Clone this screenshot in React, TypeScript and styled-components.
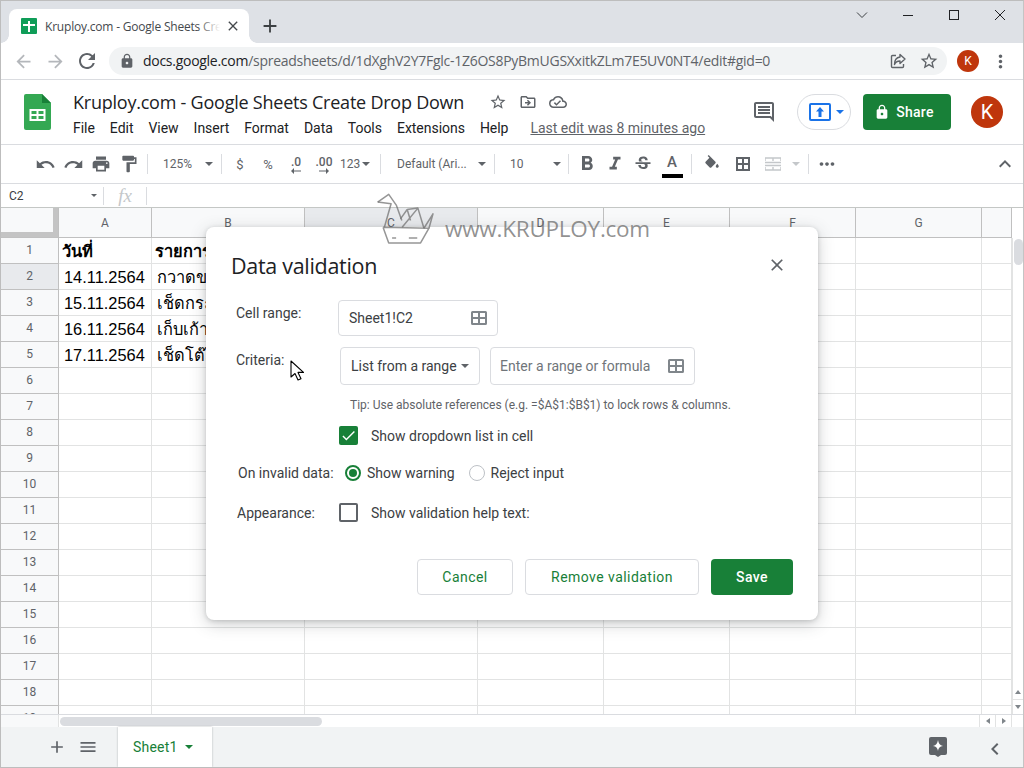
import React from 'react';
import styled, { createGlobalStyle } from 'styled-components';
import {
  MdUndo, MdRedo, MdLocalPrintshop, MdFormatPaint, MdMoreHoriz, MdKeyboardArrowUp,
  MdStarBorder, MdOutlineDriveFileMove, MdOutlineCloudDone, MdLock, MdArrowBack, MdArrowForward, MdRefresh,
  MdClose, MdAdd, MdMoreVert, MdMenu, MdChevronLeft, MdCheck, MdFormatBold, MdFormatItalic, MdStrikethroughS,
} from 'react-icons/md';

const GlobalStyle = createGlobalStyle`
  html, body { margin: 0; padding: 0; background: #fff; overflow: hidden; }
  * { box-sizing: border-box; }
`;

const ui = `Roboto, "Liberation Sans", sans-serif`;
const display = `"Open Sans", Roboto, sans-serif`;
const thai = `"Liberation Sans", "Noto Sans", "DejaVu Sans", sans-serif`;

const Frame = styled.div`
  position: relative;
  width: 1024px;
  height: 768px;
  border: 1px solid #bdbdbd;
  border-right-color: #c4c4c4;
  display: flex;
  flex-direction: column;
  overflow: hidden;
  font-family: ${ui};
  color: #3c4043;
`;

/* browser chrome */
const TabStrip = styled.div`
  height: 42px;
  flex: none;
  background: #dee1e6;
  display: flex;
  align-items: flex-end;
  padding-left: 8px;
`;

const Tab = styled.div`
  position: relative;
  width: 240px;
  height: 34px;
  background: #fff;
  border-radius: 8px 8px 0 0;
  display: flex;
  align-items: center;
  padding-left: 12px;
  &::before, &::after {
    content: '';
    position: absolute;
    bottom: 0;
    width: 8px;
    height: 8px;
  }
  &::before { left: -8px; background: radial-gradient(circle at 0 0, #dee1e6 7.5px, #fff 8px); }
  &::after { right: -8px; background: radial-gradient(circle at 100% 0, #dee1e6 7.5px, #fff 8px); }
`;

const Favicon = styled.svg`
  width: 16px;
  height: 16px;
  flex: none;
`;

const TabTitle = styled.div`
  position: relative;
  width: 175px;
  margin-left: 8px;
  font: 12px ${display};
  letter-spacing: -0.2px;
  color: #45494d;
  white-space: nowrap;
  overflow: hidden;
  &::after {
    content: '';
    position: absolute;
    top: 0;
    right: 0;
    bottom: 0;
    width: 22px;
    background: linear-gradient(90deg, rgba(255, 255, 255, 0), #fff);
  }
`;

const TabClose = styled.div`
  display: flex;
  margin-left: 5px;
  color: #45494d;
  font-size: 16px;
`;

const NewTab = styled.div`
  width: 28px;
  height: 34px;
  margin-left: 7px;
  display: flex;
  align-items: center;
  justify-content: center;
  color: #3c4043;
  font-size: 22px;
`;

const WindowControls = styled.div`
  margin-left: auto;
  align-self: flex-start;
  display: flex;
`;

const WindowButton = styled.div`
  width: 46px;
  height: 28px;
  display: flex;
  align-items: center;
  justify-content: center;
`;

const NavBar = styled.div`
  height: 37px;
  flex: none;
  border-bottom: 1px solid #dadce0;
  display: flex;
  align-items: center;
  padding-left: 6px;
`;

const NavButton = styled.div<{ $off?: boolean }>`
  width: 32px;
  display: flex;
  justify-content: center;
  font-size: 21px;
  color: ${p => (p.$off ? '#b4b7bb' : '#5f6368')};
`;

const Omnibox = styled.div`
  width: 838px;
  height: 28px;
  margin-left: 6px;
  margin-top: -1px;
  background: #f1f3f4;
  border-radius: 14px;
  display: flex;
  align-items: center;
  padding: 0 8px 0 10px;
  font: 14px ${display};
  letter-spacing: -0.275px;
  color: #5f6368;
  white-space: nowrap;
`;

const UrlHost = styled.span`
  color: #202124;
`;

const Url = styled.div`
  margin-left: 8px;
`;

const OmniIcons = styled.div`
  margin-left: auto;
  display: flex;
  align-items: center;
  gap: 12px;
  font-size: 18px;
  color: #5f6368;
`;

const Avatar = styled.div<{ $size: number }>`
  width: ${p => p.$size}px;
  height: ${p => p.$size}px;
  flex: none;
  border-radius: 50%;
  background: #bf360c;
  color: #fff;
  display: flex;
  align-items: center;
  justify-content: center;
  font: ${p => (p.$size > 24 ? 20 : 12)}px ${ui};
`;

const NavAvatar = styled(Avatar)`
  margin-left: 10px;
`;

const NavMenu = styled.div`
  margin-left: 11px;
  display: flex;
  font-size: 21px;
  color: #5f6368;
`;

/* sheets header */
const DocHeader = styled.div`
  height: 65px;
  flex: none;
  border-bottom: 1px solid #dadce0;
  display: flex;
  align-items: center;
`;

const LogoBox = styled.div`
  width: 72px;
  flex: none;
  display: flex;
  padding-left: 23px;
`;

const TitleColumn = styled.div`
  display: flex;
  flex-direction: column;
  margin-top: 3px;
`;

const TitleRow = styled.div`
  display: flex;
  align-items: center;
  height: 24px;
`;

const DocTitle = styled.div`
  width: 392px;
  font: 18px ${display};
  letter-spacing: -0.23px;
  color: #202124;
  white-space: nowrap;
`;

const TitleIcons = styled.div`
  display: flex;
  gap: 12px;
  margin-left: 24px;
  font-size: 18px;
  color: #5f6368;
`;

const MenuRow = styled.div`
  display: flex;
  align-items: center;
  gap: 15px;
  margin-top: 5px;
  height: 18px;
`;

const MenuItem = styled.span`
  font-size: 14px;
  color: #202124;
  letter-spacing: -0.03px;
`;

const LastEdit = styled.span`
  margin-left: 7px;
  font-size: 14px;
  color: #5f6368;
  text-decoration: underline;
`;

const HeaderRight = styled.div`
  margin-left: auto;
  padding-right: 20px;
  display: flex;
  align-items: center;
`;

const CommentIcon = styled.svg`
  width: 24px;
  height: 24px;
  fill: #5f6368;
`;

const PresentPill = styled.div`
  width: 54px;
  height: 36px;
  margin-left: 21px;
  border: 1px solid #dadce0;
  border-radius: 18px;
  display: flex;
  align-items: center;
  padding-left: 11px;
  gap: 5px;
`;

const PresentBox = styled.div`
  width: 22px;
  height: 18px;
  border: 2px solid #1a73e8;
  border-radius: 2px;
  display: flex;
  align-items: center;
  justify-content: center;
`;

const Caret = styled.div<{ $color?: string; $size?: number }>`
  width: 0;
  height: 0;
  flex: none;
  border-left: ${p => p.$size ?? 4.5}px solid transparent;
  border-right: ${p => p.$size ?? 4.5}px solid transparent;
  border-top: ${p => p.$size ?? 4.5}px solid ${p => p.$color ?? '#5f6368'};
`;

const ShareButton = styled.div`
  width: 88px;
  height: 36px;
  margin-left: 12px;
  margin-right: 20px;
  padding-right: 6px;
  background: #188038;
  border-radius: 4px;
  color: #fff;
  display: flex;
  align-items: center;
  justify-content: center;
  gap: 6px;
  font: 500 14px ${ui};
  letter-spacing: 0.25px;
`;

/* toolbar */
const Toolbar = styled.div`
  height: 39px;
  flex: none;
  border-bottom: 1px solid #dadce0;
  display: flex;
  align-items: center;
  padding-left: 30px;
  color: #5f6368;
`;

const ToolIcon = styled.div<{ $w?: number; $ml?: number; $off?: boolean; $size?: number }>`
  width: ${p => p.$w ?? 28}px;
  margin-left: ${p => p.$ml ?? 0}px;
  height: 28px;
  flex: none;
  display: flex;
  align-items: center;
  justify-content: center;
  font-size: ${p => p.$size ?? 20}px;
  color: ${p => (p.$off ? '#c4c7ca' : '#5f6368')};
`;

const ToolText = styled(ToolIcon)`
  font: 13px ${ui};
`;

const Separator = styled.div`
  width: 1px;
  height: 20px;
  margin: 0 4px;
  flex: none;
  background: #dadce0;
`;

const DropDown = styled.div<{ $w: number; $pl: number; $pr: number }>`
  width: ${p => p.$w}px;
  flex: none;
  padding: 0 ${p => p.$pr}px 0 ${p => p.$pl}px;
  display: flex;
  align-items: center;
  justify-content: space-between;
  font: 12px ${ui};
  color: #5f6368;
  white-space: nowrap;
`;

const DecimalBox = styled.div`
  display: flex;
  flex-direction: column;
  align-items: center;
  font: 500 12px ${ui};
  line-height: 11px;
  margin-top: 3px;
  color: #5f6368;
`;

const TextColor = styled.div`
  width: 30px;
  height: 30px;
  flex: none;
  display: flex;
  flex-direction: column;
  align-items: center;
  font: 500 15px ${ui};
  line-height: 23px;
  margin-top: 3px;
  color: #5f6368;
`;

const ColorBar = styled.div`
  width: 21px;
  height: 4px;
  background: #000;
`;

const CollapseButton = styled.div`
  margin-left: auto;
  margin-right: 6px;
  display: flex;
  font-size: 24px;
  color: #5f6368;
`;

/* formula bar */
const FormulaBar = styled.div`
  height: 24px;
  flex: none;
  border-bottom: 1px solid #c4c7c5;
  display: flex;
  align-items: center;
`;

const NameBox = styled.div`
  width: 102px;
  padding: 0 6px 0 8px;
  display: flex;
  align-items: center;
  justify-content: space-between;
  font: 12px ${ui};
  color: #3c4043;
`;

const FormulaDivider = styled.div`
  width: 1px;
  height: 18px;
  flex: none;
  background: #dadce0;
`;

const FxLabel = styled.div`
  width: 42px;
  text-align: center;
  font: italic 19px "Liberation Serif", serif;
  color: #c4c7ca;
`;

/* grid */
const SheetArea = styled.div`
  flex: 1;
  min-height: 0;
  display: flex;
`;

const GridColumn = styled.div`
  width: 1011px;
  flex: none;
  display: flex;
  flex-direction: column;
  overflow: hidden;
`;

const gridColumns = '58px 93px 153px 173px 126px 126px 126px 126px 30px';

const HeaderRow = styled.div`
  height: 30px;
  flex: none;
  display: grid;
  grid-template-columns: ${gridColumns};
  background: #f8f9fa;
  border-bottom: 1px solid #c0c0c0;
`;

const Corner = styled.div`
  border-right: 1px solid #c0c0c0;
  background: #f8f9fa;
  box-shadow: inset -5px -5px 0 #c4c4c4;
`;

const ColHead = styled.div<{ $active?: boolean }>`
  border-right: 1px solid #c0c0c0;
  background: ${p => (p.$active ? '#e8eaed' : 'transparent')};
  display: flex;
  align-items: center;
  justify-content: center;
  font: 12px ${ui};
  color: #5f6368;
`;

const RowBody = styled.div`
  flex: 1;
  min-height: 0;
  overflow: hidden;
`;

const Row = styled.div`
  height: 26px;
  display: grid;
  grid-template-columns: ${gridColumns};
`;

const RowHead = styled.div<{ $active?: boolean }>`
  background: ${p => (p.$active ? '#e8eaed' : '#f8f9fa')};
  border-right: 1px solid #c0c0c0;
  border-bottom: 1px solid #c0c0c0;
  padding-bottom: 2px;
  display: flex;
  align-items: center;
  justify-content: center;
  font: 12px ${ui};
  color: #5f6368;
`;

const Cell = styled.div<{ $bold?: boolean }>`
  border-right: 1px solid #e2e3e3;
  border-bottom: 1px solid #e2e3e3;
  padding: 1px 3px 0 ${p => (p.$bold ? 3 : 5)}px;
  display: flex;
  align-items: center;
  white-space: nowrap;
  overflow: hidden;
  font: ${p => (p.$bold ? 700 : 400)} 16.4px ${thai};
  color: #000;
`;

const VScroll = styled.div`
  flex: 1;
  display: flex;
  flex-direction: column;
  border-left: 1px solid #e2e3e3;
  background: #fff;
  margin-top: 30px;
`;

const VThumb = styled.div`
  width: 9px;
  height: 26px;
  margin: 1px 0 0 1px;
  border-radius: 5px;
  background: #dadce0;
`;

const ScrollArrow = styled.div<{ $up?: boolean }>`
  height: 15px;
  display: flex;
  align-items: center;
  justify-content: center;
  border-top: ${p => (p.$up ? 'none' : '1px solid #e2e3e3')};
  margin-top: ${p => (p.$up ? 'auto' : '0')};
  &::after {
    content: '';
    border-left: 3.5px solid transparent;
    border-right: 3.5px solid transparent;
    ${p => (p.$up ? 'border-bottom' : 'border-top')}: 4px solid #80868b;
  }
`;

const HScrollRow = styled.div`
  height: 12px;
  flex: none;
  display: flex;
  align-items: center;
  border-top: 1px solid #dadce0;
  background: #fff;
  box-sizing: content-box;
`;

const HScrollLead = styled.div`
  width: 58px;
  height: 100%;
  background: #f8f9fa;
  border-right: 1px solid #e2e3e3;
`;

const HThumb = styled.div`
  width: 262px;
  height: 9px;
  margin-left: 1px;
  border-radius: 5px;
  background: #dadce0;
`;

const HArrow = styled.div<{ $first?: boolean; $left?: boolean }>`
  width: 16px;
  height: 100%;
  margin-left: ${p => (p.$first ? 'auto' : '0')};
  border-left: 1px solid #e2e3e3;
  display: flex;
  align-items: center;
  justify-content: center;
  &::after {
    content: '';
    border-top: 3.5px solid transparent;
    border-bottom: 3.5px solid transparent;
    ${p => (p.$left ? 'border-right' : 'border-left')}: 4px solid #80868b;
  }
`;

const HEnd = styled.div`
  width: 12px;
  height: 100%;
  border-left: 1px solid #e2e3e3;
`;

/* sheet tabs */
const SheetBar = styled.div`
  height: 40px;
  flex: none;
  background: #f1f3f4;
  display: flex;
  align-items: center;
  padding-left: 44px;
  color: #5f6368;
`;

const SheetBarIcon = styled.div<{ $ml?: number }>`
  width: 24px;
  margin-left: ${p => p.$ml ?? 0}px;
  display: flex;
  justify-content: center;
  font-size: 20px;
  color: #5f6368;
`;

const SheetTab = styled.div`
  width: 94px;
  height: 40px;
  margin-left: 18px;
  background: #fff;
  box-shadow: 0 0 2px rgba(60, 64, 67, 0.35);
  display: flex;
  align-items: center;
  padding-left: 15px;
  gap: 7px;
  font: 400 14px ${ui};
  letter-spacing: 0.2px;
  color: #188038;
`;

const ExploreBox = styled.div`
  margin-left: auto;
  display: flex;
`;

const SideToggle = styled.div`
  margin: 3px 16px 0 36px;
  display: flex;
  font-size: 24px;
  color: #5f6368;
`;

/* watermark */
const Watermark = styled.div`
  position: absolute;
  left: 376px;
  top: 191px;
  z-index: 3;
  display: flex;
  align-items: flex-end;
  pointer-events: none;
`;

const WatermarkText = styled.div`
  margin-left: 11px;
  font: 22.5px "Open Sans", sans-serif;
  letter-spacing: -0.25px;
  line-height: 30px;
  color: rgba(115, 115, 115, 0.78);
`;

/* dialog */
const Dialog = styled.div`
  position: absolute;
  left: 205px;
  top: 226px;
  z-index: 2;
  width: 612px;
  height: 393px;
  background: #fff;
  border-radius: 8px;
  box-shadow: 0 4px 16px rgba(60, 64, 67, 0.25), 0 1px 4px rgba(60, 64, 67, 0.2);
  padding: 24px 25px 25px 30px;
  display: flex;
  flex-direction: column;
  font: 14px ${ui};
  color: #3c4043;
`;

const DialogHead = styled.div`
  height: 28px;
  margin-left: -5px;
  display: flex;
  align-items: center;
  justify-content: space-between;
`;

const DialogTitle = styled.div`
  font: 21.5px ${display};
  letter-spacing: -0.3px;
  color: #202124;
`;

const DialogClose = styled.div`
  display: flex;
  margin-right: 6px;
  font-size: 20px;
  color: #5f6368;
`;

const FormRow = styled.div<{ $mt: number; $ml?: number }>`
  display: flex;
  align-items: flex-start;
  margin-top: ${p => p.$mt}px;
  margin-left: ${p => p.$ml ?? 0}px;
`;

const FieldLabel = styled.div<{ $w: number; $top?: number }>`
  width: ${p => p.$w}px;
  flex: none;
  padding-top: ${p => p.$top ?? 5}px;
  line-height: 16px;
  color: #3c4043;
`;

const Field = styled.div<{ $w: number; $h: number; $ml?: number }>`
  width: ${p => p.$w}px;
  height: ${p => p.$h}px;
  margin-left: ${p => p.$ml ?? 0}px;
  flex: none;
  border: 1px solid #dadce0;
  border-radius: 4px;
  padding: 0 10px 1px 10px;
  display: flex;
  align-items: center;
  justify-content: space-between;
  color: #3c4043;
`;

const Placeholder = styled.span`
  margin-left: -1px;
  color: #70757a;
`;

const GridIcon = styled.svg`
  width: 16px;
  height: 14px;
  flex: none;
`;

const TipText = styled.div`
  margin: 12px 0 0 114px;
  line-height: 16px;
  font-size: 12px;
  color: #5f6368;
`;

const CheckRow = styled.div<{ $mt?: number; $ml?: number }>`
  display: flex;
  align-items: center;
  margin-top: ${p => p.$mt ?? 0}px;
  margin-left: ${p => p.$ml ?? 0}px;
`;

const CheckBox = styled.div<{ $on?: boolean }>`
  width: 19px;
  height: 19px;
  flex: none;
  border-radius: 2px;
  border: ${p => (p.$on ? 'none' : '2px solid #5f6368')};
  background: ${p => (p.$on ? '#188038' : '#fff')};
  color: #fff;
  display: flex;
  align-items: center;
  justify-content: center;
  font-size: 17px;
`;

const CheckLabel = styled.span`
  margin-left: 13px;
  color: #3c4043;
`;

const Radio = styled.div<{ $on?: boolean; $ml?: number }>`
  width: 16px;
  height: 16px;
  flex: none;
  margin-left: ${p => p.$ml ?? 0}px;
  border-radius: 50%;
  border: ${p => (p.$on ? '2px solid #188038' : '1px solid #bdc1c6')};
  display: flex;
  align-items: center;
  justify-content: center;
  &::after {
    content: '';
    display: ${p => (p.$on ? 'block' : 'none')};
    width: 8px;
    height: 8px;
    border-radius: 50%;
    background: #188038;
  }
`;

const RadioLabel = styled.span`
  margin-left: 6px;
  line-height: 20px;
  color: #3c4043;
`;

const ButtonRow = styled.div`
  margin-top: 37px;
  display: flex;
  justify-content: flex-end;
  gap: 12px;
`;

const DialogButton = styled.div<{ $primary?: boolean; $w: number }>`
  width: ${p => p.$w}px;
  height: 36px;
  border-radius: 4px;
  border: ${p => (p.$primary ? 'none' : '1px solid #dadce0')};
  background: ${p => (p.$primary ? '#188038' : '#fff')};
  color: ${p => (p.$primary ? '#fff' : '#188038')};
  padding-bottom: ${p => (p.$primary ? 0 : 1)}px;
  display: flex;
  align-items: center;
  justify-content: center;
  font: ${p => (p.$primary ? 500 : 400)} 14px ${ui};
  letter-spacing: 0.45px;
`;

const Pointer = styled.svg`
  position: absolute;
  left: 84px;
  top: 133px;
  width: 15px;
  height: 22px;
`;

const menuItems = ['File', 'Edit', 'View', 'Insert', 'Format', 'Data', 'Tools', 'Extensions', 'Help'];
const columns = ['A', 'B', 'C', 'D', 'E', 'F', 'G', ''];

const rows: Record<number, [string, string]> = {
  1: ['วันที่', 'รายการ'],
  2: ['14.11.2564', 'กวาดขยะ'],
  3: ['15.11.2564', 'เช็ดกระจก'],
  4: ['16.11.2564', 'เก็บเก้าอี้'],
  5: ['17.11.2564', 'เช็ดโต๊ะ'],
};

const RangeIcon = () => (
  <GridIcon viewBox="0 0 16 14">
    <path fill="#80868b" d="M1.5 0h13A1.5 1.5 0 0 1 16 1.5v11a1.5 1.5 0 0 1-1.5 1.5h-13A1.5 1.5 0 0 1 0 12.500v-11A1.500 1.500 0 0 1 1.500 0zM2 2v4h5V2H2zm7 0v4h5V2H9zM2 8v4h5V8H2zm7 0v4h5V8H9z" />
  </GridIcon>
);

const SheetsLogo = () => (
  <svg width="27" height="36" viewBox="0 0 27 36">
    <path fill="#34a853" d="M2 0h16l9 9v25a2 2 0 0 1-2 2H2a2 2 0 0 1-2-2V2a2 2 0 0 1 2-2z" />
    <path fill="#188038" d="M18 0l9 9h-9z" />
    <path fill="#fff" d="M5.500 15h16v12h-16zM7.500 17v3h5v-3zm7 0v3h5v-3zm-7 5v3h5v-3zm7 0v3h5v-3z" fillRule="evenodd" />
  </svg>
);

const Crane = () => (
  <svg width="57" height="52" viewBox="50 20 170 155" fill="none" stroke="rgba(115,115,115,0.75)" strokeWidth="4.500" strokeLinejoin="round">
    <path d="M52 50 L85 27 L108 60 L124 105" />
    <path d="M52 50 L92 55 L72 125" />
    <path d="M68 125 L85 172 L180 172 L205 128 L68 125" />
    <path d="M120 100 L140 72 L150 105 M140 72 L172 68 L190 128 M172 68 L125 125" />
    <path d="M190 128 L217 85 L205 128" />
    <path d="M95 157h12M145 157h25" />
  </svg>
);

export default function App() {
  return (
    <>
      <GlobalStyle />
      <Frame>
        <TabStrip>
          <Tab>
            <Favicon viewBox="0 0 16 16">
              <rect width="16" height="16" rx="1" fill="#0f9d58" />
              <path d="M7 3h2v3h5v2H9v6H7V8H2V6h5z" fill="#fff" />
            </Favicon>
            <TabTitle>Kruploy.com - Google Sheets Create Drop Down</TabTitle>
            <TabClose><MdClose /></TabClose>
          </Tab>
          <NewTab><MdAdd /></NewTab>
          <WindowControls>
            <WindowButton>
              <svg width="12" height="8" viewBox="0 0 12 8"><path d="M1 1.500l5 5 5-5" fill="none" stroke="#3c4043" /></svg>
            </WindowButton>
            <WindowButton>
              <svg width="12" height="12" viewBox="0 0 12 12"><path d="M1 6.500h10" stroke="#202124" /></svg>
            </WindowButton>
            <WindowButton>
              <svg width="12" height="12" viewBox="0 0 12 12"><rect x="1.500" y="1.500" width="9" height="9" fill="none" stroke="#202124" /></svg>
            </WindowButton>
            <WindowButton>
              <svg width="12" height="12" viewBox="0 0 12 12"><path d="M1 1l10 10M11 1L1 11" stroke="#202124" /></svg>
            </WindowButton>
          </WindowControls>
        </TabStrip>

        <NavBar>
          <NavButton $off><MdArrowBack /></NavButton>
          <NavButton $off><MdArrowForward /></NavButton>
          <NavButton><MdRefresh size={24} /></NavButton>
          <Omnibox>
            <MdLock size={16} color="#5f6368" />
            <Url><UrlHost>docs.google.com</UrlHost>/spreadsheets/d/1dXghV2Y7Fglc-1Z6OS8PyBmUGSXxitkZLm7E5UV0NT4/edit#gid=0</Url>
            <OmniIcons>
              <svg width="18" height="18" viewBox="0 0 18 18" fill="none" stroke="#5f6368" strokeWidth="1.400" strokeLinejoin="round">
                <path d="M7 3.500H3.500a1 1 0 0 0-1 1v10a1 1 0 0 0 1 1h10a1 1 0 0 0 1-1V12" />
                <path d="M11 2.500l5 4.500-5 4.500V9C8.500 9 6.500 10 5.500 12.500 5.500 8.500 7.500 5.500 11 5z" />
              </svg>
              <MdStarBorder size={20} />
            </OmniIcons>
          </Omnibox>
          <NavAvatar $size={22}>K</NavAvatar>
          <NavMenu><MdMoreVert /></NavMenu>
        </NavBar>

        <DocHeader>
          <LogoBox><SheetsLogo /></LogoBox>
          <TitleColumn>
            <TitleRow>
              <DocTitle>Kruploy.com - Google Sheets Create Drop Down</DocTitle>
              <TitleIcons>
                <MdStarBorder />
                <MdOutlineDriveFileMove />
                <MdOutlineCloudDone />
              </TitleIcons>
            </TitleRow>
            <MenuRow>
              {menuItems.map(item => <MenuItem key={item}>{item}</MenuItem>)}
              <LastEdit>Last edit was 8 minutes ago</LastEdit>
            </MenuRow>
          </TitleColumn>
          <HeaderRight>
            <CommentIcon viewBox="0 0 24 24">
              <path d="M20 17.170L18.830 16H4V4h16v13.170zM20 2H4c-1.100 0-2 .9-2 2v12c0 1.100.9 2 2 2h14l4 4V4c0-1.100-.9-2-2-2z" />
              <path d="M6 12h12v2H6zM6 9h12v2H6zM6 6h12v2H6z" />
            </CommentIcon>
            <PresentPill>
              <PresentBox>
                <svg width="10" height="10" viewBox="0 0 10 10"><path d="M5 0l4 4.500H6.500V10h-3V4.500H1z" fill="#1a73e8" /></svg>
              </PresentBox>
              <Caret $color="#1a73e8" />
            </PresentPill>
            <ShareButton><MdLock size={16} />Share</ShareButton>
            <Avatar $size={32}>K</Avatar>
          </HeaderRight>
        </DocHeader>

        <Toolbar>
          <ToolIcon $size={21}><MdUndo /></ToolIcon>
          <ToolIcon $size={21}><MdRedo /></ToolIcon>
          <ToolIcon><MdLocalPrintshop /></ToolIcon>
          <ToolIcon><MdFormatPaint /></ToolIcon>
          <Separator />
          <DropDown $w={65} $pl={11} $pr={4}>125%<Caret /></DropDown>
          <Separator />
          <ToolText>$</ToolText>
          <ToolText>%</ToolText>
          <ToolIcon>
            <DecimalBox>
              .0
              <svg width="10" height="6" viewBox="0 0 10 6"><path d="M10 2.500H3V0L0 3l3 3V3.500h7z" fill="#5f6368" /></svg>
            </DecimalBox>
          </ToolIcon>
          <ToolIcon>
            <DecimalBox>
              .00
              <svg width="10" height="6" viewBox="0 0 10 6"><path d="M0 2.500h7V0l3 3-3 3V3.500H0z" fill="#5f6368" /></svg>
            </DecimalBox>
          </ToolIcon>
          <DropDown $w={38} $pl={2} $pr={6}>123<Caret $size={4} /></DropDown>
          <Separator />
          <DropDown $w={105} $pl={12} $pr={4}>Default (Ari...<Caret /></DropDown>
          <Separator />
          <DropDown $w={65} $pl={11} $pr={3}>10<Caret /></DropDown>
          <Separator />
          <ToolIcon $size={24}><MdFormatBold /></ToolIcon>
          <ToolIcon $size={22}><MdFormatItalic /></ToolIcon>
          <ToolIcon $size={20}><MdStrikethroughS /></ToolIcon>
          <TextColor>A<ColorBar /></TextColor>
          <Separator />
          <ToolIcon $ml={2}>
            <svg width="18" height="18" viewBox="0 0 24 24" fill="#5f6368">
              <path d="M16.560 8.940L7.620 0 6.210 1.410l2.380 2.380-5.150 5.150c-.59.590-.59 1.540 0 2.120l5.500 5.500c.29.290.680.440 1.060.440s.770-.150 1.060-.440l5.500-5.500c.590-.580.590-1.530 0-2.120z" />
              <path d="M19 11.500s-2 2.170-2 3.500c0 1.100.9 2 2 2s2-.9 2-2c0-1.330-2-3.500-2-3.500z" />
            </svg>
          </ToolIcon>
          <ToolIcon $ml={3}>
            <svg width="14" height="14" viewBox="0 0 14 14"><path fill="#5f6368" fillRule="evenodd" d="M0 0h14v14H0zM2 2v4h4V2zm6 0v4h4V2zM2 8v4h4V8zm6 0v4h4V8z" /></svg>
          </ToolIcon>
          <ToolIcon $ml={2}>
            <svg width="16" height="14" viewBox="0 0 16 14" fill="none" stroke="#c4c7ca" strokeWidth="1.400">
              <path d="M0 1h16M0 13h16M0 1v3M16 1v3M0 10v3M16 10v3M0 5.500h16M0 8.500h16M8 1v3M8 10v3" />
            </svg>
          </ToolIcon>
          <ToolIcon $w={17}><Caret $color="#c4c7ca" /></ToolIcon>
          <Separator />
          <ToolIcon $size={22}><MdMoreHoriz /></ToolIcon>
          <CollapseButton><MdKeyboardArrowUp /></CollapseButton>
        </Toolbar>

        <FormulaBar>
          <NameBox>C2<Caret $size={3.500} /></NameBox>
          <FormulaDivider />
          <FxLabel>fx</FxLabel>
          <FormulaDivider />
        </FormulaBar>

        <SheetArea>
          <GridColumn>
            <HeaderRow>
              <Corner />
              {columns.map((c, i) => <ColHead key={i} $active={c === 'C'}>{c}</ColHead>)}
            </HeaderRow>
            <RowBody>
              {Array.from({ length: 19 }, (_, i) => i + 1).map(n => (
                <Row key={n}>
                  <RowHead $active={n === 2}>{n}</RowHead>
                  <Cell $bold={n === 1}>{rows[n]?.[0]}</Cell>
                  <Cell $bold={n === 1}>{rows[n]?.[1]}</Cell>
                  {columns.slice(2).map((c, i) => <Cell key={i} />)}
                </Row>
              ))}
            </RowBody>
          </GridColumn>
          <VScroll>
            <VThumb />
            <ScrollArrow $up />
            <ScrollArrow />
          </VScroll>
        </SheetArea>

        <HScrollRow>
          <HScrollLead />
          <HThumb />
          <HArrow $first $left />
          <HArrow />
          <HEnd />
        </HScrollRow>

        <SheetBar>
          <SheetBarIcon><MdAdd /></SheetBarIcon>
          <SheetBarIcon $ml={7}><MdMenu /></SheetBarIcon>
          <SheetTab>Sheet1<Caret $color="#188038" /></SheetTab>
          <ExploreBox>
            <svg width="18" height="20" viewBox="0 0 18 20">
              <path fill="#5f6368" d="M2 0h14a2 2 0 0 1 2 2v14a2 2 0 0 1-2 2h-4l-3 2-3-2H2a2 2 0 0 1-2-2V2a2 2 0 0 1 2-2z" />
              <path fill="#fff" d="M9 3c.6 3.300 1.700 5.400 5 6-3.300.6-4.400 1.700-5 5-.6-3.300-1.700-4.400-5-5 3.300-.6 4.400-2.700 5-6z" />
            </svg>
          </ExploreBox>
          <SideToggle><MdChevronLeft /></SideToggle>
        </SheetBar>

        <Dialog>
          <DialogHead>
            <DialogTitle>Data validation</DialogTitle>
            <DialogClose><MdClose /></DialogClose>
          </DialogHead>
          <FormRow $mt={21}>
            <FieldLabel $w={102}>Cell range:</FieldLabel>
            <Field $w={160} $h={36}>Sheet1!C2<RangeIcon /></Field>
          </FormRow>
          <FormRow $mt={11}>
            <FieldLabel $w={104}>Criteria:</FieldLabel>
            <Field $w={140} $h={38}>List from a range<Caret $size={4} /></Field>
            <Field $w={205} $h={38} $ml={10}>
              <Placeholder>Enter a range or formula</Placeholder>
              <RangeIcon />
            </Field>
          </FormRow>
          <TipText>Tip: Use absolute references (e.g. =$A$1:$B$1) to lock rows &amp; columns.</TipText>
          <CheckRow $mt={13} $ml={103}>
            <CheckBox $on><MdCheck /></CheckBox>
            <CheckLabel>Show dropdown list in cell</CheckLabel>
          </CheckRow>
          <CheckRow $mt={18} $ml={2}>
            <FieldLabel $w={107} $top={0}>On invalid data:</FieldLabel>
            <Radio $on />
            <RadioLabel>Show warning</RadioLabel>
            <Radio $ml={14} />
            <RadioLabel>Reject input</RadioLabel>
          </CheckRow>
          <CheckRow $mt={20} $ml={1}>
            <FieldLabel $w={102} $top={0}>Appearance:</FieldLabel>
            <CheckBox />
            <CheckLabel>Show validation help text:</CheckLabel>
          </CheckRow>
          <ButtonRow>
            <DialogButton $w={96}>Cancel</DialogButton>
            <DialogButton $w={174}>Remove validation</DialogButton>
            <DialogButton $w={82} $primary>Save</DialogButton>
          </ButtonRow>
          <Pointer viewBox="0 0 15 22">
            <path d="M1 1v16l4-3.500 3 6.500 3-1.300-3-6.300h5.500z" fill="#fff" stroke="#000" strokeWidth="1.100" strokeLinejoin="round" />
          </Pointer>
        </Dialog>

        <Watermark>
          <Crane />
          <WatermarkText>www.KRUPLOY.com</WatermarkText>
        </Watermark>
      </Frame>
    </>
  );
}
